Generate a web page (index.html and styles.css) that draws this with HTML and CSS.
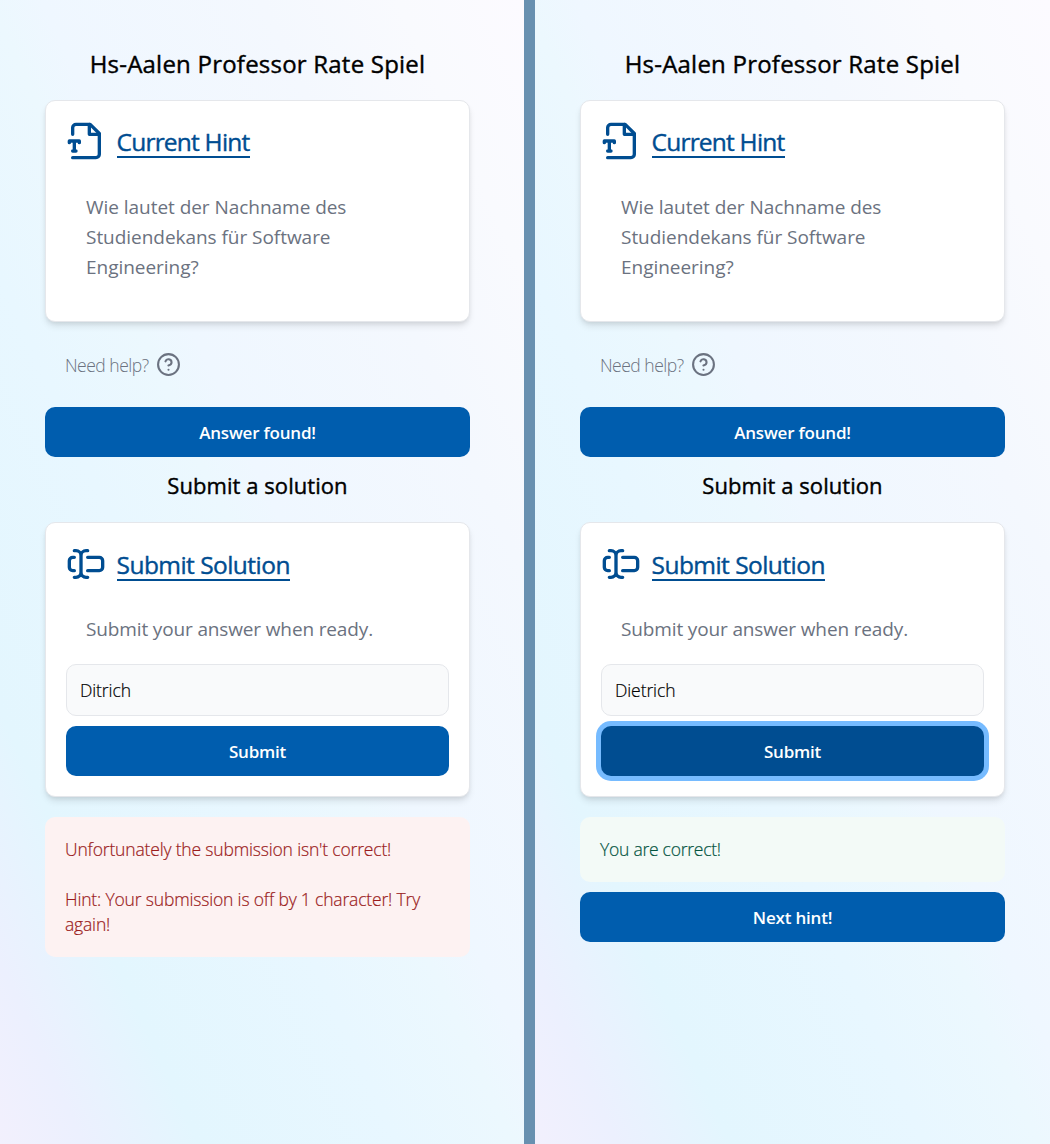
FILE: index.html
```html
<!DOCTYPE html>
<html lang="en">
<head>
<meta charset="utf-8">
<title>Hs-Aalen Professor Rate Spiel</title>
<link rel="stylesheet" href="styles.css">
</head>
<body>
<svg width="0" height="0" class="defs">
  <symbol id="file-type" viewBox="0 0 24 24">
    <path d="M4 8V4a2 2 0 0 1 2-2h8.5L20 7.5V20a2 2 0 0 1-2 2H4"/>
    <path d="M14 2v6h6M2 13v-1h6v1M4 18h2M5 12v6"/>
  </symbol>
  <symbol id="text-input" viewBox="0 0 24 24">
    <path d="M5 4h1a3 3 0 0 1 3 3 3 3 0 0 1 3-3h1M13 20h-1a3 3 0 0 1-3-3 3 3 0 0 1-3 3H5M5 16H4a2 2 0 0 1-2-2v-4a2 2 0 0 1 2-2h1M13 8h7a2 2 0 0 1 2 2v4a2 2 0 0 1-2 2h-7M9 7v10"/>
  </symbol>
  <symbol id="help" viewBox="0 0 24 24">
    <circle cx="12" cy="12" r="10"/>
    <path d="M9.09 9a3 3 0 0 1 5.83 1c0 2-3 3-3 3M12 17h.01"/>
  </symbol>
</svg>
<div class="screens">
  <main class="screen">
    <h1 class="title"><span>Hs-Aalen Professor Rate Spiel</span></h1>
    <section class="card hint-card">
      <header class="card-head"><svg class="icon file"><use href="#file-type"/></svg><h2 class="hint-title">Current Hint</h2></header>
      <p class="card-text">Wie lautet der Nachname des<br>Studiendekans für Software<br>Engineering?</p>
    </section>
    <div class="help"><span>Need help?</span><svg class="icon help-icon"><use href="#help"/></svg></div>
    <button class="btn">Answer found!</button>
    <h2 class="subtitle">Submit a solution</h2>
    <section class="card submit-card">
      <header class="card-head"><svg class="icon"><use href="#text-input"/></svg><h2>Submit Solution</h2></header>
      <p class="card-text submit-text">Submit your answer when ready.</p>
      <input class="field" value="Ditrich">
      <button class="btn">Submit</button>
    </section>
    <div class="alert error"><p>Unfortunately the submission isn't correct!</p><p>Hint: Your submission is off by 1 character! Try<br>again!</p></div>
  </main>
  <main class="screen">
    <h1 class="title"><span>Hs-Aalen Professor Rate Spiel</span></h1>
    <section class="card hint-card">
      <header class="card-head"><svg class="icon file"><use href="#file-type"/></svg><h2 class="hint-title">Current Hint</h2></header>
      <p class="card-text">Wie lautet der Nachname des<br>Studiendekans für Software<br>Engineering?</p>
    </section>
    <div class="help"><span>Need help?</span><svg class="icon help-icon"><use href="#help"/></svg></div>
    <button class="btn">Answer found!</button>
    <h2 class="subtitle">Submit a solution</h2>
    <section class="card submit-card">
      <header class="card-head"><svg class="icon"><use href="#text-input"/></svg><h2>Submit Solution</h2></header>
      <p class="card-text submit-text">Submit your answer when ready.</p>
      <input class="field" value="Dietrich">
      <button class="btn focused">Submit</button>
    </section>
    <div class="alert success"><p>You are correct!</p></div>
    <button class="btn next">Next hint!</button>
  </main>
</div>
</body>
</html>
```
FILE: styles.css
```css
* { box-sizing: border-box; margin: 0; }
body { font-family: "Open Sans", "Noto Sans", sans-serif; color: #000; overflow: hidden; }
.defs { display: block; }
.screens { display: grid; grid-template-columns: 524px 515px; column-gap: 11px; height: 1144px; background: #6890b0; }
.screen {
  display: flex; flex-direction: column; padding: 45px 45px 0;
  background: linear-gradient(to top right, #f2f0fd 0%, #ecf0fe 8%, #e3f6fe 19%, #e8f7ff 38%, #ecf8fe 49%, #eff7ff 54%, #f4f8fe 75%, #f9fafe 88%, #fcfaff 100%);
}
.screen:first-child { padding-right: 54px; }
.title, .subtitle, .card-head h2 { -webkit-text-stroke: .4px currentColor; }
.title { height: 55px; line-height: 38px; font-size: 24px; font-weight: 400; text-align: center; white-space: nowrap; letter-spacing: .22px; }
.card { display: flex; flex-direction: column; background: #fff; border: 1.25px solid #e5e7eb; border-radius: 10px; box-shadow: 0 5px 7.5px -1px rgb(0 0 0 / .1), 0 2.5px 5px -2.5px rgb(0 0 0 / .1); padding: 20px; }
.hint-card { height: 222.4px; }
.submit-card { height: 275px; }
.card-head { display: flex; gap: 10.5px; height: 43px; color: #004d91; }
.submit-card .card-head { padding-top: 1px; }
.card-head h2 { height: 37px; line-height: 41px; font-size: 24.5px; font-weight: 400; letter-spacing: -.54px; border-bottom: 2.5px solid #004d91; white-space: nowrap; }
.card-head .hint-title { letter-spacing: -.78px; }
.icon { width: 40px; height: 40px; flex: none; fill: none; stroke: currentColor; stroke-width: 2; stroke-linecap: round; stroke-linejoin: round; }
.card-text { margin: 28px 0 0 20px; font-size: 19px; line-height: 30px; color: #6b7280; white-space: nowrap; letter-spacing: -.04px; }
.submit-text { height: 30px; letter-spacing: -.14px; }
.help { display: flex; align-items: center; gap: 7.5px; height: 25px; margin: 30px 0 30px 20px; font-size: 17.5px; font-weight: 300; color: #6b7280; }
.help span { letter-spacing: -.5px; }
.help-icon { width: 25px; height: 25px; }
.btn { display: block; flex: none; width: 100%; height: 50px; border: 0; border-radius: 10px; padding: 0; background: #005dae; color: #fff; font: 600 17px "Open Sans", sans-serif; letter-spacing: -.2px; }
.subtitle { height: 65px; line-height: 57px; font-size: 22px; font-weight: 400; text-align: center; letter-spacing: .06px; }
.field { height: 52px; margin: 20px 0 10px; width: 100%; border: 1.25px solid #e5e7eb; border-radius: 10px; background: #f9fafb; padding: 0 13px 1px; font: 300 17.5px "Open Sans", sans-serif; color: #000; -webkit-text-stroke: .2px #000; letter-spacing: -.1px; }
.focused { background: #004d91; box-shadow: 0 0 0 5px #76bbff; }
.alert { margin-top: 20px; padding: 20px; border-radius: 10px; font-size: 17.5px; font-weight: 300; line-height: 25px; white-space: nowrap; letter-spacing: -.17px; -webkit-text-stroke: .2px currentColor; }
.alert p + p { margin-top: 25px; }
.error { background: #fdf2f2; color: #9b1c1c; }
.success { background: #f3faf7; color: #03543f; letter-spacing: -.25px; }
.next { margin-top: 10px; }
```
